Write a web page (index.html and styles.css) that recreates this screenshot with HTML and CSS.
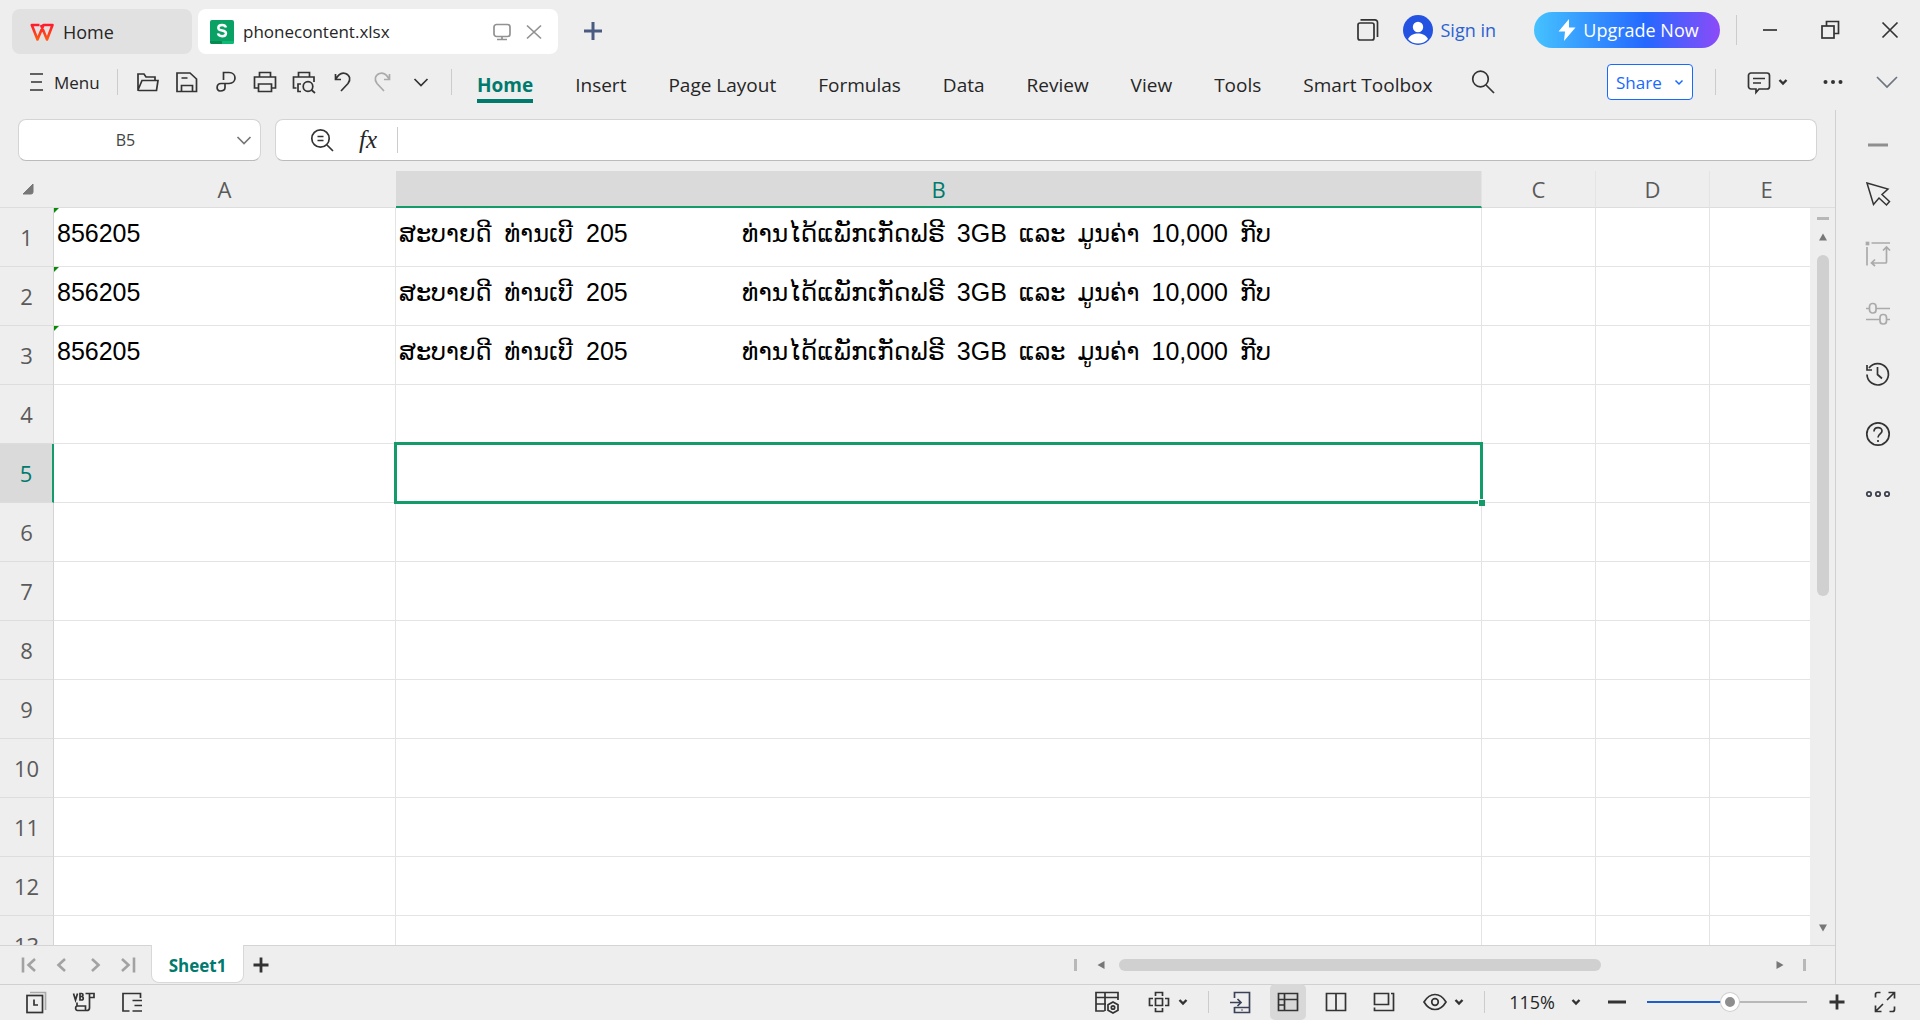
FILE: index.html
```html
<!DOCTYPE html>
<html lang="en">
<head>
<meta charset="utf-8">
<title>phonecontent.xlsx</title>
<link rel="stylesheet" href="styles.css">
</head>
<body>
<div class="app">
  <header class="titlebar">
    <button class="tab tab-home">
      <svg class="icon" viewBox="0 0 24 24"><defs><linearGradient id="wps" x1="0" y1="0" x2="0" y2="1"><stop offset="0" stop-color="#ff1a2e"/><stop offset="1" stop-color="#ff5a10"/></linearGradient></defs><path fill="none" stroke="url(#wps)" stroke-width="2.600" stroke-linejoin="round" d="M9.500 5H1.800L7.500 19.500L13.500 5H22.500L17 19.500L11 5"/></svg>
      <span>Home</span>
    </button>
    <div class="tab tab-file">
      <svg class="icon" viewBox="0 0 24 24"><g stroke="none"><rect width="24" height="24" rx="2" fill="#0aa264"/><path d="M0 21h12v3H2a2 2 0 0 1-2-2z" fill="#078a4f"/><path d="M12 21h12v1a2 2 0 0 1-2 2H12z" fill="#0cba74"/></g><path d="M16 7.500C15.500 5.800 14 5 12.100 5C10 5 8.300 6 8.300 7.900C8.300 11.800 16 9.300 16 13.200C16 15.200 14.300 16.200 12.100 16.200C9.800 16.200 8.300 15.200 8 13.400" fill="none" stroke="#fff" stroke-width="2.400"/></svg>
      <span class="tab-name">phonecontent.xlsx</span>
      <svg class="icon faint" viewBox="0 0 24 24"><rect x="4" y="4.500" width="16" height="12" rx="2.500"/><path d="M12 16.500v3M7 19.500h10"/></svg>
      <button class="plain tab-close" aria-label="Close tab"><svg class="icon faint" viewBox="0 0 24 24"><path d="M5 5.500l14 13M19 5.500l-14 13"/></svg></button>
    </div>
    <button class="plain new-tab" aria-label="New tab"><svg class="icon" viewBox="0 0 24 24"><path d="M12 3v18M3 12h18" stroke="#4a5a80" stroke-width="3"/></svg></button>
    <div class="title-right">
      <button class="plain" aria-label="Windows"><svg class="icon" viewBox="0 0 24 24"><rect x="2" y="5" width="16" height="17" rx="2"/><path d="M4.500 1.800H19a2.500 2.500 0 0 1 2.500 2.500V19"/></svg></button>
      <a class="signin" href="#">
        <svg class="avatar" viewBox="0 0 30 30"><circle cx="15" cy="15" r="15" fill="#2353e0"/><circle cx="15" cy="12" r="5.200" fill="#fff"/><path d="M5 24c2-4 6-5.600 10-5.600S23 20 25 24c-2.500 3-6 4.500-10 4.500S7.500 27 5 24z" fill="#fff"/></svg>
        <span>Sign in</span></a>
      <button class="upgrade"><svg class="icon" viewBox="0 0 24 24"><path d="M14 1L3.500 13.500H10L9 23L20.500 9.500H14z" fill="#fff" stroke="none"/></svg><span>Upgrade Now</span></button>
      <span class="rule rule-title"></span>
      <div class="window-buttons">
        <button class="plain" aria-label="Minimize"><svg class="icon" viewBox="0 0 24 24"><path d="M5 12h14"/></svg></button>
        <button class="plain" aria-label="Restore"><svg class="icon" viewBox="0 0 24 24"><rect x="4" y="8" width="12" height="12"/><path d="M8.500 8V3.500h12v12h-4.500"/></svg></button>
        <button class="plain" aria-label="Close"><svg class="icon" viewBox="0 0 24 24"><path d="M4.500 4.500l15 15M19.500 4.500l-15 15"/></svg></button>
      </div>
    </div>
  </header>

  <nav class="menubar">
    <button class="plain menu"><svg class="icon" viewBox="0 0 24 24"><path d="M6 4h13M7 12h11M6 20h13"/></svg><span>Menu</span></button>
    <span class="rule"></span>
    <div class="quick">
      <button class="plain" aria-label="Open"><svg class="icon" viewBox="0 0 24 24"><path d="M2 20V4h6l2 3h9v3.500M2 20L6 10.500h16L20.500 20.500H3z"/></svg></button>
      <button class="plain" aria-label="Save"><svg class="icon" viewBox="0 0 24 24"><path d="M6 21.500H2V3h13l6.500 6V21.500H18M6.500 21.500v-6h11v6zM6.500 8h6"/></svg></button>
      <button class="plain" aria-label="Export PDF"><svg class="icon" viewBox="0 0 24 24"><path d="M9.500 10V2.500H15c8 0 8 11 0 11H7c-5 0-5 7.500-1 7.500c3 0 5-1 5-3.500v-4"/></svg></button>
      <button class="plain" aria-label="Print"><svg class="icon" viewBox="0 0 24 24"><path d="M6.500 7V2.500h11V7M5.500 18H1.500V7H22.500V18H18.500M5.500 14h13v7.500h-13z"/></svg></button>
      <button class="plain" aria-label="Print preview"><svg class="icon" viewBox="0 0 24 24"><path d="M6.500 7V2.500h11V7M4.500 18H1.500V7H22V12M9 14H6v7.500H9"/><circle cx="16" cy="16.500" r="4.800"/><path d="M19.500 20l3.500 3"/></svg></button>
      <button class="plain" aria-label="Undo"><svg class="icon" viewBox="0 0 24 24"><path d="M4.500 4v5.500H10M4.500 9.500C8 3 12 2.500 14.500 3.500c4.500 1.700 5.500 6 2.500 10L10 21"/></svg></button>
      <button class="plain" aria-label="Redo"><svg class="icon pale" viewBox="0 0 24 24"><path d="M19.500 4v5.500H14M19.500 9.500C16 3 12 2.500 9.500 3.500c-4.500 1.700-5.500 6-2.500 10L14 21"/></svg></button>
      <button class="plain" aria-label="More"><svg class="icon" viewBox="0 0 24 24"><path d="M5.500 9l6.500 6.500L18.500 9"/></svg></button>
    </div>
    <span class="rule"></span>
    <div class="ribbon">
      <a class="active" href="#">Home</a><a href="#">Insert</a><a href="#">Page Layout</a><a href="#">Formulas</a><a href="#">Data</a><a href="#">Review</a><a href="#">View</a><a href="#">Tools</a><a href="#">Smart Toolbox</a>
    </div>
    <button class="plain search" aria-label="Search"><svg class="icon" viewBox="0 0 24 24"><circle cx="9.500" cy="9" r="7.800"/><path d="M15 15l8 8"/></svg></button>
    <div class="menu-right">
      <button class="share"><span>Share</span><svg class="caret" viewBox="0 0 10 10"><path d="M1.500 3.500L5 7l3.500-3.500" stroke="#1769ff"/></svg></button>
      <span class="rule"></span>
      <button class="plain with-caret" aria-label="Comments"><svg class="icon" viewBox="0 0 24 24"><path d="M4 3h16a2.500 2.500 0 0 1 2.500 2.500v11A2.500 2.500 0 0 1 20 19h-8l-3 3.500V19H4a2.500 2.500 0 0 1-2.500-2.500v-11A2.500 2.500 0 0 1 4 3zM6 8.500h12M6 13h8"/></svg><svg class="caret bold" viewBox="0 0 10 10"><path d="M1.500 3L5 6.500L8.500 3"/></svg></button>
      <button class="plain dots" aria-label="More options"><svg class="icon" viewBox="0 0 24 24"><g fill="#333" stroke="none"><circle cx="4.500" cy="12" r="2"/><circle cx="12" cy="12" r="2"/><circle cx="19.500" cy="12" r="2"/></g></svg></button>
      <button class="plain" aria-label="Collapse ribbon"><svg class="icon" viewBox="0 0 24 24"><path d="M2 7l10 10L22 7" stroke="#6d7480"/></svg></button>
    </div>
  </nav>

  <main class="workspace">
    <section class="book">
      <div class="formula-row">
        <div class="name-box"><input type="text" value="B5" aria-label="Name box"><svg class="icon" viewBox="0 0 24 24"><path d="M5.500 9l6.500 6.500L18.500 9" stroke="#777"/></svg></div>
        <div class="formula-box">
          <button class="plain" aria-label="Zoom out"><svg class="icon" viewBox="0 0 24 24"><circle cx="10.500" cy="10.500" r="8.700"/><path d="M17 17l6 6M7.500 8.500h6M7.500 12.500h6"/></svg></button>
          <button class="plain fx">fx</button>
          <span class="rule"></span>
          <input type="text" aria-label="Formula">
        </div>
      </div>

      <div class="grid-area">
        <div class="grid">
          <table>
            <colgroup><col class="c-head"><col class="c-a"><col class="c-b"><col class="c-n"><col class="c-n"><col class="c-n"></colgroup>
            <thead><tr><th class="corner"><svg viewBox="0 0 12 12"><path d="M11 1v8a2 2 0 0 1-2 2H1z" fill="#777" stroke="#777" stroke-linejoin="round"/></svg></th><th>A</th><th class="picked">B</th><th>C</th><th>D</th><th>E</th></tr></thead>
            <tbody>
              <tr><th>1</th><td class="flag">856205</td><td class="message"><div><span class="greet"><span class="lao">ສະບາຍດີ</span> <span class="lao">ທ່ານເບີ</span> <span>205</span></span><span>ທ່ານໄດ້ແພັກເກັດຟຣີ</span> <span>3GB</span> <span class="lao">ແລະ</span> <span class="lao">ມູນຄ່າ</span> <span>10,000</span> <span class="lao">ກີບ</span></div></td><td></td><td></td><td></td></tr>
              <tr><th>2</th><td class="flag">856205</td><td class="message"><div><span class="greet"><span class="lao">ສະບາຍດີ</span> <span class="lao">ທ່ານເບີ</span> <span>205</span></span><span>ທ່ານໄດ້ແພັກເກັດຟຣີ</span> <span>3GB</span> <span class="lao">ແລະ</span> <span class="lao">ມູນຄ່າ</span> <span>10,000</span> <span class="lao">ກີບ</span></div></td><td></td><td></td><td></td></tr>
              <tr><th>3</th><td class="flag">856205</td><td class="message"><div><span class="greet"><span class="lao">ສະບາຍດີ</span> <span class="lao">ທ່ານເບີ</span> <span>205</span></span><span>ທ່ານໄດ້ແພັກເກັດຟຣີ</span> <span>3GB</span> <span class="lao">ແລະ</span> <span class="lao">ມູນຄ່າ</span> <span>10,000</span> <span class="lao">ກີບ</span></div></td><td></td><td></td><td></td></tr>
              <tr><th>4</th><td></td><td></td><td></td><td></td><td></td></tr>
              <tr><th class="picked">5</th><td></td><td class="selected"><i></i></td><td></td><td></td><td></td></tr>
              <tr><th>6</th><td></td><td></td><td></td><td></td><td></td></tr>
              <tr><th>7</th><td></td><td></td><td></td><td></td><td></td></tr>
              <tr><th>8</th><td></td><td></td><td></td><td></td><td></td></tr>
              <tr><th>9</th><td></td><td></td><td></td><td></td><td></td></tr>
              <tr><th>10</th><td></td><td></td><td></td><td></td><td></td></tr>
              <tr><th>11</th><td></td><td></td><td></td><td></td><td></td></tr>
              <tr><th>12</th><td></td><td></td><td></td><td></td><td></td></tr>
              <tr><th>13</th><td></td><td></td><td></td><td></td><td></td></tr>
            </tbody>
          </table>
        </div>
        <div class="vscroll">
          <span class="grip"></span>
          <svg class="arrow" viewBox="0 0 10 10"><path d="M5 1.500L9 8.500H1z"/></svg>
          <div class="vtrack"><span class="thumb"></span></div>
          <svg class="arrow" viewBox="0 0 10 10"><path d="M5 8.500L9 1.500H1z"/></svg>
        </div>
      </div>

      <footer class="sheetbar">
        <div class="sheet-nav">
          <button class="plain" aria-label="First sheet"><svg class="icon" viewBox="0 0 24 24"><path d="M6 4.500v15M18 6l-6.500 6l6.500 6"/></svg></button>
          <button class="plain" aria-label="Previous sheet"><svg class="icon" viewBox="0 0 24 24"><path d="M15 6l-6.500 6l6.500 6"/></svg></button>
          <button class="plain" aria-label="Next sheet"><svg class="icon" viewBox="0 0 24 24"><path d="M9 6l6.500 6L9 18"/></svg></button>
          <button class="plain" aria-label="Last sheet"><svg class="icon" viewBox="0 0 24 24"><path d="M18 4.500v15M6 6l6.500 6L6 18"/></svg></button>
        </div>
        <button class="sheet-tab">Sheet1</button>
        <button class="plain add-sheet" aria-label="Add sheet"><svg class="icon" viewBox="0 0 24 24"><path d="M12 4.500v15M4.500 12h15" stroke-width="2.800"/></svg></button>
        <div class="hscroll">
          <span class="grip"></span>
          <svg class="arrow" viewBox="0 0 10 10"><path d="M1.500 5L8.500 1v8z"/></svg>
          <div class="htrack"><span class="thumb"></span></div>
          <svg class="arrow" viewBox="0 0 10 10"><path d="M8.500 5L1.500 1v8z"/></svg>
          <span class="grip"></span>
        </div>
      </footer>
    </section>

    <aside class="sidebar">
      <button class="plain collapse" aria-label="Collapse"><svg class="icon" viewBox="0 0 24 24"><path d="M2 12h20" stroke="#8f8f8f" stroke-width="3"/></svg></button>
      <button class="plain" aria-label="Select"><svg class="icon" viewBox="0 0 24 24"><path d="M1 1L22 7L16 12.500L23.500 19.500L20.500 23L13 16L7.500 22.500z" stroke-width="1.500"/></svg></button>
      <button class="plain" aria-label="Transpose"><svg class="icon pale" viewBox="0 0 24 24"><path d="M5.500 1H24M1 5v18.500M20.500 5v15a1 1 0 0 1-1 1H6M17 8.500L20.500 5L24 8.500M9 17.500L5.500 21L9 24"/><rect x=".5" y=".5" width="2" height="2" fill="#aaa"/></svg></button>
      <button class="plain" aria-label="Properties"><svg class="icon pale" viewBox="0 0 24 24"><path d="M0 6.500h3.500M10 6.500h14M0 17.500h14M20.500 17.500H24"/><rect x="3.500" y="1.500" width="6.500" height="9.500" rx="3"/><rect x="14" y="12.500" width="6.500" height="9.500" rx="3"/></svg></button>
      <button class="plain" aria-label="History"><svg class="icon" viewBox="0 0 24 24"><path d="M1 12.500a10.700 10.700 0 1 0 2-6.500M1 3v5h5M11.500 5v7.500l4.500 4"/></svg></button>
      <button class="plain" aria-label="Help"><svg class="icon" viewBox="0 0 24 24"><circle cx="12" cy="12" r="11.200"/><path d="M8 9.500c0-5.200 8-5.200 8-.5c0 2.800-4 3-4 6.500M12 18v2"/></svg></button>
      <button class="plain" aria-label="More panels"><svg class="icon" viewBox="0 0 24 24"><g stroke="#404452" stroke-width="1.800"><circle cx="3" cy="12" r="2.200"/><circle cx="12" cy="12" r="2.200"/><circle cx="21" cy="12" r="2.200"/></g></svg></button>
    </aside>
  </main>

  <footer class="statusbar">
    <div class="status-left">
      <button class="plain" aria-label="Backups"><svg class="icon" viewBox="0 0 24 24"><path d="M6 2.500H21.500V20" stroke="#aaa"/><rect x="3" y="5.500" width="15.500" height="17"/><path d="M10 9.500V15h4"/></svg></button>
      <button class="plain" aria-label="Macros"><svg class="icon" viewBox="0 0 24 24"><path d="M1.500 3.500L3.500 10l2-6.500M8 3.500v6.500h1.500a1.500 1.500 0 0 0 0-3.500H8h1.500a1.500 1.500 0 0 0 0-3zM13.500 3.500H22v4h-4M17.500 3.500V18c0 2-1 2.500-3 2.500H5.500c-2.500 0-2.500-4.500 0-4.500h8v4.500M5 15.500V12.500"/></svg></button>
      <button class="plain" aria-label="Outline"><svg class="icon" viewBox="0 0 24 24"><path d="M9.500 21H3V3.500h17.500V8M12.500 10.500H22M14.500 15.500H22M12.500 21H22"/></svg></button>
    </div>
    <div class="status-right">
      <button class="plain" aria-label="Table settings"><svg class="icon" viewBox="0 0 24 24"><path d="M9.500 21H1V2.500H23V10M1 7.500h22M1 14h10M10 2.500V21M18 12l5 2.700v5.600L18 23l-5-2.700v-5.600z"/><circle cx="18" cy="17.500" r="1.700"/></svg></button>
      <button class="plain with-caret" aria-label="Crosshair"><svg class="icon" viewBox="0 0 24 24"><path d="M8.500 8.500h7v7h-7zM8.500 6V2.500h7V6M8.500 18v3.500h7V18M6 8.500H2.500v7H6M18 8.500h3.500v7H18"/></svg><svg class="caret bold" viewBox="0 0 10 10"><path d="M1.500 3L5 6.500L8.500 3"/></svg></button>
      <span class="rule"></span>
      <div class="views">
        <button class="plain" aria-label="Send to phone"><svg class="icon" viewBox="0 0 24 24"><path d="M6.500 8V2.500h15v20h-15V17M6.500 17.500h15M2 12.500h11M9.500 9l3.500 3.500L9.500 16M14 19.500v1" stroke="#3a4258"/></svg></button>
        <button class="plain on" aria-label="Normal view"><svg class="icon" viewBox="0 0 24 24"><path d="M2.500 3.500h19v17h-19zM2.500 9.500h19M8.500 3.500v17M2.500 15h6"/></svg></button>
        <button class="plain" aria-label="Page layout view"><svg class="icon" viewBox="0 0 24 24"><path d="M2.500 3.500h19v17h-19zM12 3.500v17"/></svg></button>
        <button class="plain" aria-label="Page break view"><svg class="icon" viewBox="0 0 24 24"><path d="M2.500 3.500h14v11h-14zM2.500 17.500v3h19V3.500H19"/></svg></button>
      </div>
      <button class="plain with-caret" aria-label="Eye protection"><svg class="icon" viewBox="0 0 24 24"><path d="M1 12C7 2 17 2 23 12C17 22 7 22 1 12z"/><circle cx="12" cy="12" r="3.300"/></svg><svg class="caret bold" viewBox="0 0 10 10"><path d="M1.500 3L5 6.500L8.500 3"/></svg></button>
      <span class="rule"></span>
      <button class="plain zoom"><span>115%</span><svg class="caret bold" viewBox="0 0 10 10"><path d="M1.500 3L5 6.500L8.500 3"/></svg></button>
      <button class="plain" aria-label="Zoom out"><svg class="icon" viewBox="0 0 24 24"><path d="M3 12h18" stroke-width="3"/></svg></button>
      <input class="slider" type="range" min="0" max="100" value="52" aria-label="Zoom">
      <button class="plain" aria-label="Zoom in"><svg class="icon" viewBox="0 0 24 24"><path d="M12 4.500v15M4.500 12h15" stroke-width="2.800"/></svg></button>
      <button class="plain full" aria-label="Full screen"><svg class="icon" viewBox="0 0 24 24"><path d="M2.500 7.500v-3q0-2 2-2h3M21.500 16.500v3q0 2-2 2h-3M14 10l7.500-7.500M15.500 2.500h6v6M10 14l-7.500 7.500M8.500 21.500h-6v-6"/></svg></button>
    </div>
  </footer>
</div>
</body>
</html>
```
FILE: styles.css
```css
* { box-sizing: border-box; }
body {
  margin: 0;
  background: #eee;
  color: #262626;
  font-family: "Open Sans", "Noto Sans", sans-serif;
  font-size: 18px;
}
button, input { font: inherit; color: inherit; }
a { color: inherit; text-decoration: none; }
.app { height: 100vh; display: flex; flex-direction: column; overflow: hidden; }

.icon { width: 24px; height: 24px; flex: none; display: block; overflow: visible; fill: none; stroke: #333; stroke-width: 1.700; }
.faint { stroke: #929292; }
.pale { stroke: #aaa; }
.caret { width: 10px; height: 10px; flex: none; fill: none; stroke: #333; stroke-width: 1.500; }
.bold { stroke-width: 2.400; }
.plain { padding: 0; border: 0; background: none; display: flex; align-items: center; justify-content: center; flex: none; }
.with-caret { gap: 7px; }
.rule { width: 1px; height: 26px; flex: none; background: #ccc; }

/* Title bar */
.titlebar { height: 60px; flex: none; display: flex; align-items: center; padding: 0 10px 0 12px; }
.tab { height: 45px; margin-top: 3px; border: 0; border-radius: 8px; display: flex; align-items: center; }
.tab-home { width: 180px; padding: 0 18px; gap: 9px; background: #e1e1e1; }
.tab-file { width: 360px; margin-left: 6px; padding: 0 12px; background: #fff; }
.tab-name { flex: 1; margin-left: 9px; font-size: 17px; }
.tab-close { margin-left: 8px; }
.new-tab { margin: 2px 0 0 23px; }
.title-right { margin-left: auto; display: flex; align-items: center; }
.signin { display: flex; align-items: center; gap: 8px; margin-left: 23px; color: #2a62d4; }
.avatar { width: 30px; height: 30px; }
.upgrade {
  width: 186px; height: 36px; margin-left: 38px; padding: 0; border: 0; border-radius: 18px;
  display: flex; align-items: center; justify-content: center; gap: 4px; color: #fff;
  background: linear-gradient(90deg, #45c2ff, #2468ff 60%, #8c4bf8);
}
.rule-title { height: 30px; margin-left: 16px; }
.window-buttons { display: flex; gap: 36px; margin: 0 8px 0 21px; }

/* Menu bar */
.menubar { height: 50px; flex: none; display: flex; align-items: center; padding: 0 21px 6px 24px; }
.menu { gap: 6px; width: 93px; justify-content: flex-start; font-size: 17px; }
.quick { display: flex; gap: 15px; margin: 0 18px; }
.ribbon { display: flex; gap: 42px; margin-left: 25px; font-size: 19px; }
.ribbon a { line-height: 28px; border-bottom: 4px solid transparent; padding-top: 10px; white-space: nowrap; }
.ribbon .active { color: #007a6c; font-weight: 700; border-color: #007a6c; }
.search { margin-left: 38px; }
.menu-right { margin-left: auto; display: flex; align-items: center; }
.share { width: 86px; height: 36px; padding: 0 8px; border: 1px solid #1769ff; border-radius: 4px; background: #fff; color: #1769ff; display: flex; align-items: center; justify-content: space-between; font-size: 17px; }
.menu-right .rule { margin: 0 31px 0 22px; }
.dots { margin: 0 30px 0 33px; }

/* Workspace */
.workspace { flex: 1; min-height: 0; display: flex; }
.book { flex: 1; min-width: 0; display: flex; flex-direction: column; }
.formula-row { flex: none; display: flex; gap: 14px; padding: 9px 18px 10px; }
.name-box, .formula-box { height: 42px; display: flex; align-items: center; background: #fff; border: 1px solid #d4d4d4; border-bottom-color: #bbb; border-radius: 8px; }
.name-box { width: 243px; padding-right: 4px; }
.name-box input { flex: 1; min-width: 0; padding-left: 2px; border: 0; background: none; text-align: center; font-size: 16px; color: #444; outline: 0; }
.formula-box { flex: 1; padding-left: 34px; }
.formula-box input { flex: 1; border: 0; background: none; outline: 0; }
.fx { width: 24px; margin: 0 17px 0 22px; font: italic 25px/30px "Liberation Serif", serif; }

.grid-area { flex: 1; min-height: 0; display: flex; border-bottom: 1px solid #d4d4d4; }
.grid { flex: 1; min-width: 0; overflow: hidden; background: #fff; }
table { width: 1824px; table-layout: fixed; border-collapse: separate; border-spacing: 0; }
.c-head { width: 54px; }
.c-a { width: 342px; }
.c-b { width: 1086px; }
.c-n { width: 114px; }
th { padding: 0; background: #eee; color: #5a5a5a; font-size: 22px; font-weight: 400; line-height: 30px; border-bottom: 1px solid #ddd; }
thead th { height: 37px; border-right: 1px solid #e4e4e4; }
thead th:first-child, thead th:nth-child(2) { border-right-color: #eee; }
tbody th { height: 59px; border-right: 1px solid #d4d4d4; }
.corner svg { width: 12px; height: 12px; display: block; margin-left: 22px; }
th.picked { background: #dadada; color: #007a6c; }
thead th.picked { border-bottom: 2px solid #139b69; }
tbody th.picked { border-right: 2px solid #139b69; }
td { height: 59px; padding: 2px 3px 0; vertical-align: top; border-right: 1px solid #e4e4e4; border-bottom: 1px solid #e4e4e4; font: 25px/46px "Liberation Sans", "DejaVu Sans", sans-serif; color: #000; white-space: nowrap; }
.flag { background: linear-gradient(135deg, #078a07 3px, transparent 4px) no-repeat; }
.message div { display: flex; align-items: baseline; gap: 12px; height: 46px; }
.greet { width: 331px; display: flex; align-items: baseline; gap: 13px; }
.lao { font-size: 24px; }
.selected { position: relative; }
.selected::after { content: ""; position: absolute; inset: -2px; border: 3px solid #139b69; }
.selected i { position: absolute; z-index: 1; right: -4px; bottom: -4px; width: 7px; height: 7px; background: #139b69; border: 1px solid #fff; border-width: 1px 0 0 1px; }

.thumb { display: block; background: #d0d0d0; border-radius: 6px; }
.arrow { width: 10px; height: 10px; flex: none; fill: #777; }
.vscroll { width: 25px; margin-top: 36px; padding: 9px 0 12px; border-top: 1px solid #ddd; display: flex; flex-direction: column; align-items: center; }
.vscroll .grip { width: 12px; height: 3px; margin-bottom: 12px; background: #b8b8b8; }
.vtrack { flex: 1; margin: 13px 0; width: 12px; }
.vtrack .thumb { height: 52%; }

.sheetbar { height: 38px; flex: none; display: flex; align-items: center; padding-left: 17px; }
.sheet-nav { width: 134px; display: flex; gap: 9px; }
.sheet-nav .icon { stroke: #a2a2a2; stroke-width: 2.600; }
.sheet-tab { width: 93px; height: 38px; align-self: flex-start; margin-top: -1px; padding: 3px 0 0; border: 1px solid #d8d8d8; border-top: 0; border-radius: 0 0 8px 8px; background: #fff; color: #007a6c; font-weight: 700; font-size: 17px; }
.add-sheet { margin-left: 5px; }
.hscroll { width: 732px; margin: 0 29px 0 auto; display: flex; align-items: center; }
.hscroll .grip { width: 3px; height: 12px; background: #b8b8b8; }
.hscroll .grip:first-child { margin-right: 19px; }
.hscroll .grip:last-child { margin-left: 18px; }
.htrack { flex: 1; margin: 0 13px; }
.htrack .thumb { width: 75%; height: 12px; }

.sidebar { width: 85px; flex: none; display: flex; flex-direction: column; align-items: center; padding-top: 23px; border-left: 1px solid #d0d0d0; }
.sidebar button { margin-bottom: 36px; }
.sidebar .collapse { margin-bottom: 25px; }

/* Status bar */
.statusbar { height: 36px; flex: none; display: flex; align-items: center; border-top: 1px solid #d0d0d0; padding: 0 23px 2px 24px; }
.status-left { display: flex; gap: 24px; }
.status-right { margin-left: auto; display: flex; align-items: center; }
.status-right .rule { height: 22px; margin: 0 22px 0 20px; }
.status-right > .with-caret { margin-left: 28px; }
.views { display: flex; gap: 12px; margin: 0 -8px 0 -9px; }
.views button { width: 36px; height: 36px; border-radius: 5px; }
.views .on { background: #d8d8d8; }
.views + .with-caret { margin-left: 29px; }
.zoom { gap: 16px; margin: 0 24px 0 2px; }
.slider { appearance: none; width: 160px; height: 18px; margin: 0 18px; background: linear-gradient(90deg, #1c5fcc 52%, #b8b8b8 52%) center / 100% 2px no-repeat; }
.slider::-webkit-slider-thumb { appearance: none; width: 18px; height: 18px; border-radius: 50%; border: 4px solid #fff; background: #8e8e8e; box-shadow: 0 0 0 1px #d0d0d0; }
.full { margin-left: 24px; }
```
